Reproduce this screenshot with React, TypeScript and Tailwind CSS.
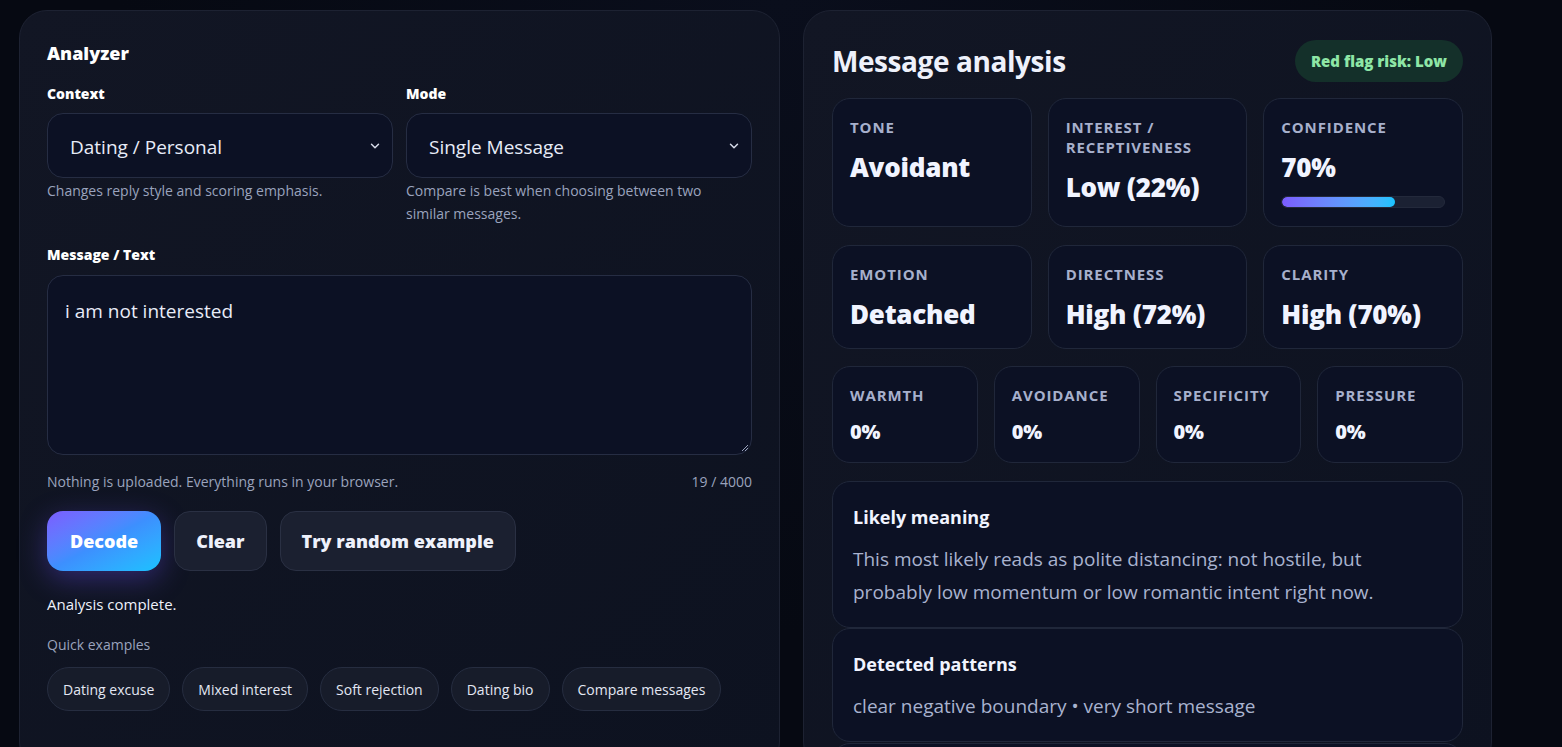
import React from 'react';
import { ChevronDown } from 'lucide-react';

const font = { fontFamily: '"Open Sans", "Liberation Sans", Arial, sans-serif' };

const Select = ({ value }: { value: string }) => (
  <div className="h-[65px] rounded-2xl border border-[#262d43] bg-[#0c1124] flex items-center justify-between pl-[22px] pr-[10px]">
    <span className="text-[19px] text-[#e8ecf8] mt-[4px]">{value}</span>
    <ChevronDown size={14} strokeWidth={2.5} className="text-[#d8dcea]" />
  </div>
);

const Stat = ({ label, value, big = true, children }: { label: React.ReactNode; value: string; big?: boolean; children?: React.ReactNode }) => (
  <div className="h-full rounded-[18px] border border-[#20273a] bg-[#0c1124] px-[17px] pt-[18px]">
    <div className="text-[15px] font-bold uppercase tracking-[0.06em] text-[#a7b0cc] leading-[20px]">{label}</div>
    <div className={`${big ? 'text-[26px] mt-[12px]' : 'text-[20px] mt-[9px]'} font-extrabold text-[#f1f4ff] leading-[36px] tracking-[-0.01em]`}>{value}</div>
    {children}
  </div>
);

const chips = ['Dating excuse', 'Mixed interest', 'Soft rejection', 'Dating bio', 'Compare messages'];

export default function App() {
  return (
    <div style={font} className="h-[747px] overflow-hidden bg-[radial-gradient(ellipse_at_top,#0a0e1c,#060912_60%)] bg-[#070a14] pl-[19px] pt-[10px]">
      <div className="grid grid-cols-[761px_689px] gap-[23px]">
        {/* analyzer */}
        <div className="rounded-[28px] border border-[#1d2232] bg-gradient-to-br from-[#121624] to-[#0d1220] px-[27px] pt-[30px] h-[760px]">
          <h2 className="text-[18px] font-extrabold text-white leading-[24px]">Analyzer</h2>
          <div className="grid grid-cols-2 gap-[13px] mt-[19px]">
            <div>
              <div className="text-[14px] font-extrabold text-white leading-[20px]">Context</div>
              <div className="mt-[9px]"><Select value="Dating / Personal" /></div>
              <p className="text-[14px] text-[#9aa3bd] leading-[23px] mt-[1px]">Changes reply style and scoring emphasis.</p>
            </div>
            <div>
              <div className="text-[14px] font-extrabold text-white leading-[20px]">Mode</div>
              <div className="mt-[9px]"><Select value="Single Message" /></div>
              <p className="text-[14px] text-[#9aa3bd] leading-[23px] mt-[1px] max-w-[320px]">Compare is best when choosing between two similar messages.</p>
            </div>
          </div>
          <div className="text-[14px] font-extrabold text-white leading-[20px] mt-[20px]">Message / Text</div>
          <div className="mt-[10px] h-[180px] rounded-2xl border border-[#262d43] bg-[#0c1124] px-[17px] pt-[21px] relative">
            <span className="text-[19px] text-[#e8ecf8]">i am not interested</span>
            <svg className="absolute right-[2px] bottom-[2px]" width="8" height="8" viewBox="0 0 8 8">
              <path d="M7 1L1 7M7 4L4 7" stroke="#9aa3bd" strokeWidth="1" />
            </svg>
          </div>
          <div className="flex justify-between text-[14px] text-[#9aa3bd] mt-[17px] leading-[20px]">
            <span>Nothing is uploaded. Everything runs in your browser.</span>
            <span>19 / 4000</span>
          </div>
          <div className="flex gap-[13px] mt-[19px]">
            <button className="h-[60px] px-[23px] rounded-2xl bg-gradient-to-br from-[#7a5cff] via-[#3d8ffe] to-[#18c2ff] text-white font-extrabold text-[18px] shadow-[0_8px_28px_rgba(110,80,255,0.35)]">Decode</button>
            <button className="h-[60px] px-[21px] rounded-2xl bg-[#1b2030] border border-[#2a3043] text-[#eef1fb] font-extrabold text-[18px]">Clear</button>
            <button className="h-[60px] px-[21px] rounded-2xl bg-[#1b2030] border border-[#2a3043] text-[#eef1fb] font-extrabold text-[18px]">Try random example</button>
          </div>
          <p className="text-[15px] text-[#eef1fb] mt-[23px] leading-[20px]">Analysis complete.</p>
          <p className="text-[14px] text-[#9aa3bd] mt-[21px] leading-[20px]">Quick examples</p>
          <div className="flex gap-[12px] mt-[12px]">
            {chips.map((c) => (
              <span key={c} className="h-[44px] px-[15px] rounded-full border border-[#262d40] bg-[#171c2a] text-[14px] text-[#e3e7f3] flex items-center">{c}</span>
            ))}
          </div>
        </div>

        {/* analysis */}
        <div className="rounded-[28px] border border-[#1d2232] bg-gradient-to-br from-[#121624] to-[#0d1220] px-[28px] pt-[28px] h-[760px]">
          <div className="flex justify-between items-center">
            <h2 className="text-[28px] font-bold text-[#eef1fb] leading-[44px] tracking-[-0.015em]">Message analysis</h2>
            <span className="h-[42px] px-[16px] rounded-full bg-[#14302a] text-[#8ee6a6] text-[15px] font-extrabold flex items-center">Red flag risk: Low</span>
          </div>
          <div className="grid grid-cols-3 gap-[16px] mt-[15px]">
            <div className="h-[129px]"><Stat label="Tone" value="Avoidant" /></div>
            <div className="h-[129px]">
              <Stat label={<>Interest /<br />Receptiveness</>} value="Low (22%)" />
            </div>
            <div className="h-[129px]">
              <Stat label="Confidence" value="70%">
                <div className="mt-[11px] h-[12px] rounded-full bg-[#1b2133] border border-[#23293b] overflow-hidden">
                  <div className="h-full rounded-full bg-gradient-to-r from-[#7b5cff] to-[#17c4ff]" style={{ width: '70%' }} />
                </div>
              </Stat>
            </div>
          </div>
          <div className="grid grid-cols-3 gap-[16px] mt-[18px]">
            {[['Emotion', 'Detached'], ['Directness', 'High (72%)'], ['Clarity', 'High (70%)']].map(([l, v]) => (
              <div key={l} className="h-[104px]"><Stat label={l} value={v} /></div>
            ))}
          </div>
          <div className="grid grid-cols-4 gap-[16px] mt-[17px]">
            {['Warmth', 'Avoidance', 'Specificity', 'Pressure'].map((l) => (
              <div key={l} className="h-[97px]"><Stat label={l} value="0%" big={false} /></div>
            ))}
          </div>
          <div className="mt-[18px] rounded-[18px] border border-[#20273a] bg-[#0c1124] px-[20px] pt-[22px] h-[147px]">
            <h3 className="text-[18px] font-bold text-[#f1f4ff] leading-[26px]">Likely meaning</h3>
            <p className="text-[19px] text-[#a9b3cf] leading-[33px] mt-[13px] max-w-[540px]">This most likely reads as polite distancing: not hostile, but probably low momentum or low romantic intent right now.</p>
          </div>
          <div className="rounded-[18px] border border-[#20273a] bg-[#0c1124] px-[20px] pt-[22px] h-[114px]">
            <h3 className="text-[18px] font-bold text-[#f1f4ff] leading-[26px]">Detected patterns</h3>
            <p className="text-[19px] text-[#a9b3cf] leading-[33px] mt-[13px]">clear negative boundary • very short message</p>
          </div>
          <div className="mt-[1px] rounded-[18px] border border-[#20273a] bg-[#0c1124] h-[60px]" />
        </div>
      </div>
    </div>
  );
}
